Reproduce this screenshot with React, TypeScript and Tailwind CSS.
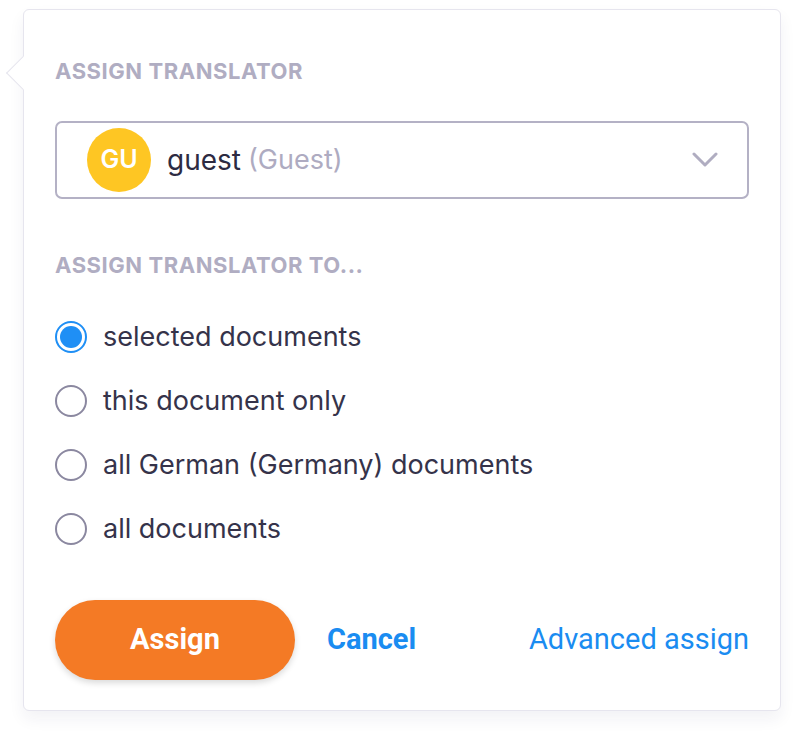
const OPTIONS = [
  { id: 'selected', label: 'selected documents' },
  { id: 'this', label: 'this document only' },
  { id: 'locale', label: 'all German (Germany) documents' },
  { id: 'all', label: 'all documents' },
]

export default function App() {
  const selected = 'selected'
  return (
    <div className="w-[798px] h-[736px] bg-white relative font-['Inter','Noto_Sans',sans-serif]">
      <div className="absolute left-[23px] top-[9px] w-[758px] h-[702px] bg-white border border-[#e6e5ee] rounded-[6px] shadow-[0_8px_16px_rgba(40,40,80,0.06)]">
        {/* pointer */}
        <div className="absolute left-[-13px] top-[51px] w-[24px] h-[24px] bg-white border-l border-b border-[#e6e5ee] rotate-45" />

        <div className="relative px-[31px] pt-[49px]">
          <p className="text-[#b0adc2] text-[22px] font-bold leading-[24px] tracking-[0.025em]">ASSIGN TRANSLATOR</p>

          <div className="mt-[38px] h-[78px] border-2 border-[#b4b1c5] rounded-[7px] flex items-center pl-[30px] pr-[29px]">
            <div className="w-[64px] h-[64px] rounded-full bg-[#fec623] flex items-center justify-center text-white text-[25px] font-semibold">
              GU
            </div>
            <span className="ml-[16px] text-[28px] text-[#2d2b42]">guest</span>
            <span className="ml-[7px] text-[27px] text-[#aeabc1]">(Guest)</span>
            <svg className="ml-auto" width="26" height="16" viewBox="0 0 26 16" fill="none">
              <polyline points="2,2 13,13 24,2" stroke="#b0adc1" strokeWidth="3" strokeLinecap="round" strokeLinejoin="round" />
            </svg>
          </div>

          <p className="mt-[54px] text-[#b0adc2] text-[22px] font-bold leading-[24px] tracking-[0.025em]">ASSIGN TRANSLATOR TO...</p>

          <div className="mt-[40px] flex flex-col gap-[24px]">
            {OPTIONS.map((o) => (
              <label key={o.id} className="flex items-center h-[40px]">
                {o.id === selected ? (
                  <span className="w-[32px] h-[32px] rounded-full border-2 border-[#1f8ff5] flex items-center justify-center">
                    <span className="w-[22px] h-[22px] rounded-full bg-[#1f8ff5]" />
                  </span>
                ) : (
                  <span className="w-[32px] h-[32px] rounded-full border-2 border-[#8b88a0]" />
                )}
                <span className="ml-[16px] text-[27px] text-[#35334a]">{o.label}</span>
              </label>
            ))}
          </div>

          <div className="mt-[51px] flex items-center">
            <button className="w-[240px] h-[80px] rounded-full bg-[#f47a25] text-white text-[29px] font-bold font-['Roboto',sans-serif] shadow-[0_3px_6px_rgba(0,0,0,0.15)]">
              Assign
            </button>
            <button className="ml-[32px] text-[#1a8cf1] text-[29px] font-bold font-['Roboto',sans-serif]">Cancel</button>
            <button className="ml-auto text-[#1a8cf1] text-[29px] font-['Roboto',sans-serif]">Advanced assign</button>
          </div>
        </div>
      </div>
    </div>
  )
}
